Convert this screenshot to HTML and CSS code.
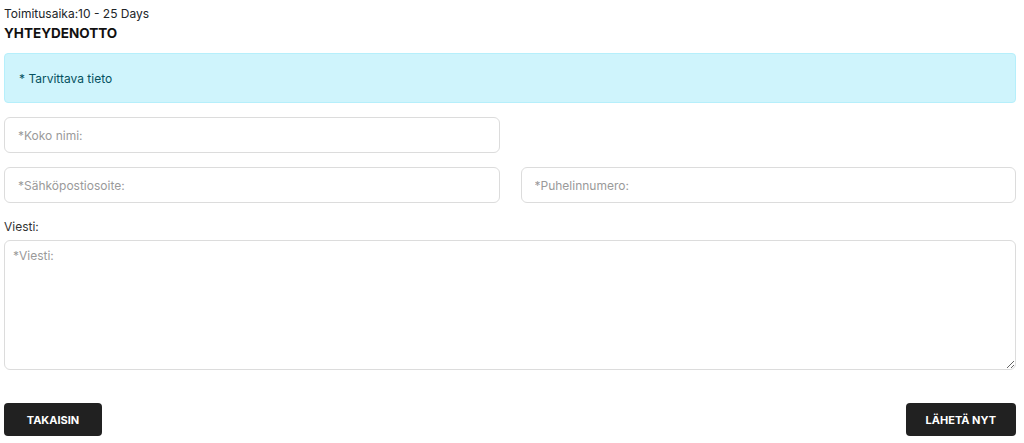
FILE: index.html
```html
<!DOCTYPE html>
<html lang="fi">
<head>
<meta charset="utf-8">
<title>Yhteydenotto</title>
<link rel="stylesheet" href="styles.css">
</head>
<body>
<div class="page">
  <div class="delivery">Toimitusaika:10 - 25 Days</div>
  <h2 class="title">YHTEYDENOTTO</h2>
  <div class="alert">* Tarvittava tieto</div>
  <form class="form">
    <div class="row">
      <input class="field" type="text" placeholder="*Koko nimi:">
    </div>
    <div class="row">
      <input class="field" type="email" placeholder="*Sähköpostiosoite:">
      <input class="field" type="tel" placeholder="*Puhelinnumero:">
    </div>
    <label class="label">Viesti:</label>
    <textarea class="area" placeholder="*Viesti:"></textarea>
    <div class="actions">
      <button type="button" class="btn">TAKAISIN</button>
      <button type="button" class="btn">LÄHETÄ NYT</button>
    </div>
  </form>
</div>
</body>
</html>
```
FILE: styles.css
```css
html, body {
  margin: 0;
  padding: 0;
  background: #fff;
}
body {
  font-family: Inter, "Open Sans", sans-serif;
  color: #212529;
}
.page {
  padding: 6px 8px 0 4px;
}
.delivery {
  font-size: 12px;
  line-height: 16px;
  color: #212529;
}
.title {
  margin: 1px 0 0 0;
  font-size: 13.5px;
  line-height: 20px;
  font-weight: 700;
  color: #111;
}
.alert {
  margin-top: 10px;
  height: 50px;
  box-sizing: border-box;
  background: #cff4fc;
  border: 1px solid #b6effb;
  border-radius: 4px;
  color: #055160;
  font-size: 12px;
  padding: 0 14px;
  display: flex;
  align-items: center;
}
.form {
  display: flex;
  flex-direction: column;
}
.row {
  display: grid;
  grid-template-columns: 1fr 1fr;
  column-gap: 21px;
  margin-top: 14px;
}
.field {
  width: 100%;
  min-width: 0;
  height: 36px;
  box-sizing: border-box;
  border: 1px solid #dcdcdc;
  border-radius: 6px;
  padding: 0 13px;
  font-family: inherit;
  font-size: 12px;
  color: #333;
  background: #fff;
  outline: none;
}
.field::placeholder, .area::placeholder {
  color: #9a9a9a;
}
.label {
  margin-top: 17px;
  font-size: 12px;
  line-height: 14px;
  color: #333;
}
.area {
  margin-top: 6px;
  height: 130px;
  box-sizing: border-box;
  border: 1px solid #dcdcdc;
  border-radius: 6px;
  padding: 7px 8px;
  font-family: inherit;
  font-size: 12px;
  color: #333;
  resize: vertical;
  outline: none;
}
.actions {
  display: flex;
  justify-content: space-between;
  margin-top: 33px;
}
.btn {
  height: 33px;
  min-width: 98px;
  box-sizing: border-box;
  background: #212121;
  color: #fff;
  border: none;
  border-radius: 4px;
  padding: 0 20px;
  font-family: inherit;
  font-size: 11px;
  font-weight: 700;
  letter-spacing: 0;
  cursor: pointer;
}
```
